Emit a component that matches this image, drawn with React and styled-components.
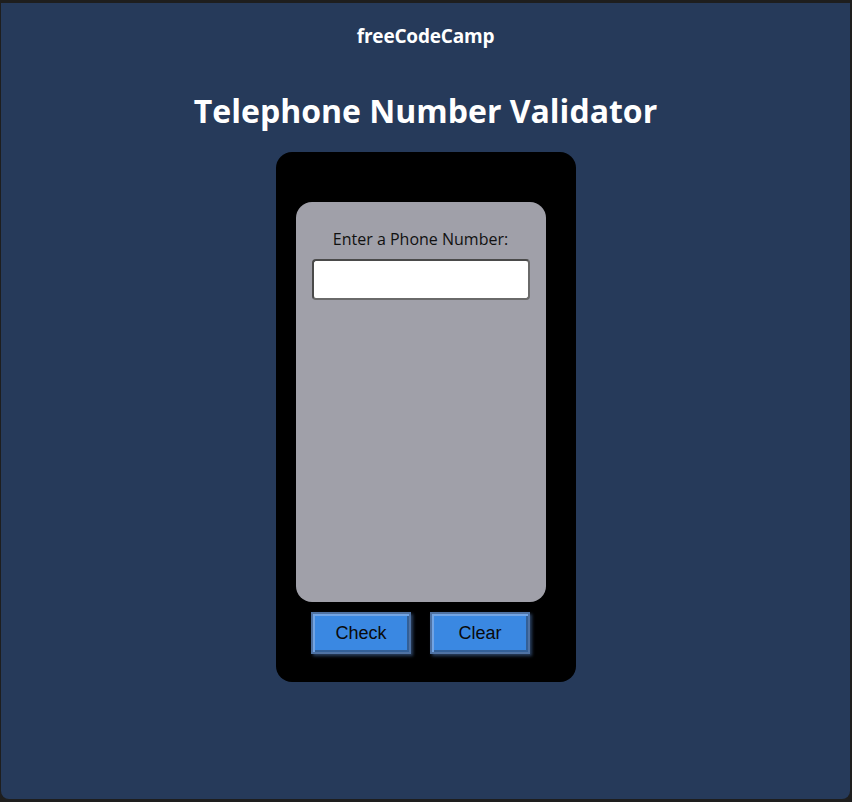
import React, { useState } from "react";
import styled, { createGlobalStyle } from "styled-components";

const GlobalStyle = createGlobalStyle`
  * { box-sizing: border-box; }
  html, body { margin: 0; padding: 0; background: #1e1e1e; }
`;

const Frame = styled.div`
  height: 802px;
  padding: 3px 2px 3px 1px;
  background: #1e1e1e;
`;

const Page = styled.main`
  height: 100%;
  background: #263a5a;
  border-radius: 0 0 8px 8px;
  display: flex;
  flex-direction: column;
  align-items: center;
  font-family: "Open Sans", "Noto Sans", sans-serif;
  color: #ffffff;
`;

const Brand = styled.div`
  margin-top: 21px;
  font-size: 19px;
  line-height: 25px;
  font-weight: 700;
  letter-spacing: -0.2px;
`;

const Title = styled.h1`
  margin: 42px 0 21px;
  font-size: 32px;
  line-height: 40px;
  font-weight: 700;
`;

const Phone = styled.div`
  width: 300px;
  height: 530px;
  background: #000;
  border-radius: 16px;
  padding: 50px 30px 0 20px;
  display: flex;
  flex-direction: column;
`;

const Screen = styled.div`
  width: 250px;
  height: 400px;
  background: #a0a0a9;
  border-radius: 16px;
  padding-top: 26px;
  display: flex;
  flex-direction: column;
  align-items: center;
`;

const Label = styled.label`
  font-size: 16px;
  line-height: 22px;
  color: #111;
  margin-bottom: 9px;
`;

const Input = styled.input`
  width: 218px;
  height: 41px;
  background: #fff;
  border: 2px solid #4a4a4a;
  border-bottom-color: #6a6a6a;
  border-right-color: #6a6a6a;
  border-radius: 4px;
  font-size: 16px;
  padding: 0 8px;
  outline: none;
`;

const Controls = styled.div`
  width: 250px;
  margin-top: 10px;
  display: flex;
  justify-content: center;
  gap: 19px;
`;

const Button = styled.button`
  width: 100px;
  height: 42px;
  background: #3a88e2;
  border: 2px solid #4f72a3;
  box-shadow: inset 2px 2px 0 #72a4e4, inset -2px -2px 0 #335f96,
    2px 2px 3px rgba(90, 140, 210, 0.45);
  font-family: "Liberation Sans", Arial, sans-serif;
  font-size: 18px;
  color: #0a0a0a;
  padding: 0;
  cursor: pointer;
`;

export default function App() {
  const [value, setValue] = useState("");
  return (
    <>
      <GlobalStyle />
      <Frame>
        <Page>
          <Brand>freeCodeCamp</Brand>
          <Title>Telephone Number Validator</Title>
          <Phone>
            <Screen>
              <Label htmlFor="user-input">Enter a Phone Number:</Label>
              <Input
                id="user-input"
                value={value}
                onChange={(e) => setValue(e.target.value)}
              />
            </Screen>
            <Controls>
              <Button>Check</Button>
              <Button onClick={() => setValue("")}>Clear</Button>
            </Controls>
          </Phone>
        </Page>
      </Frame>
    </>
  );
}
